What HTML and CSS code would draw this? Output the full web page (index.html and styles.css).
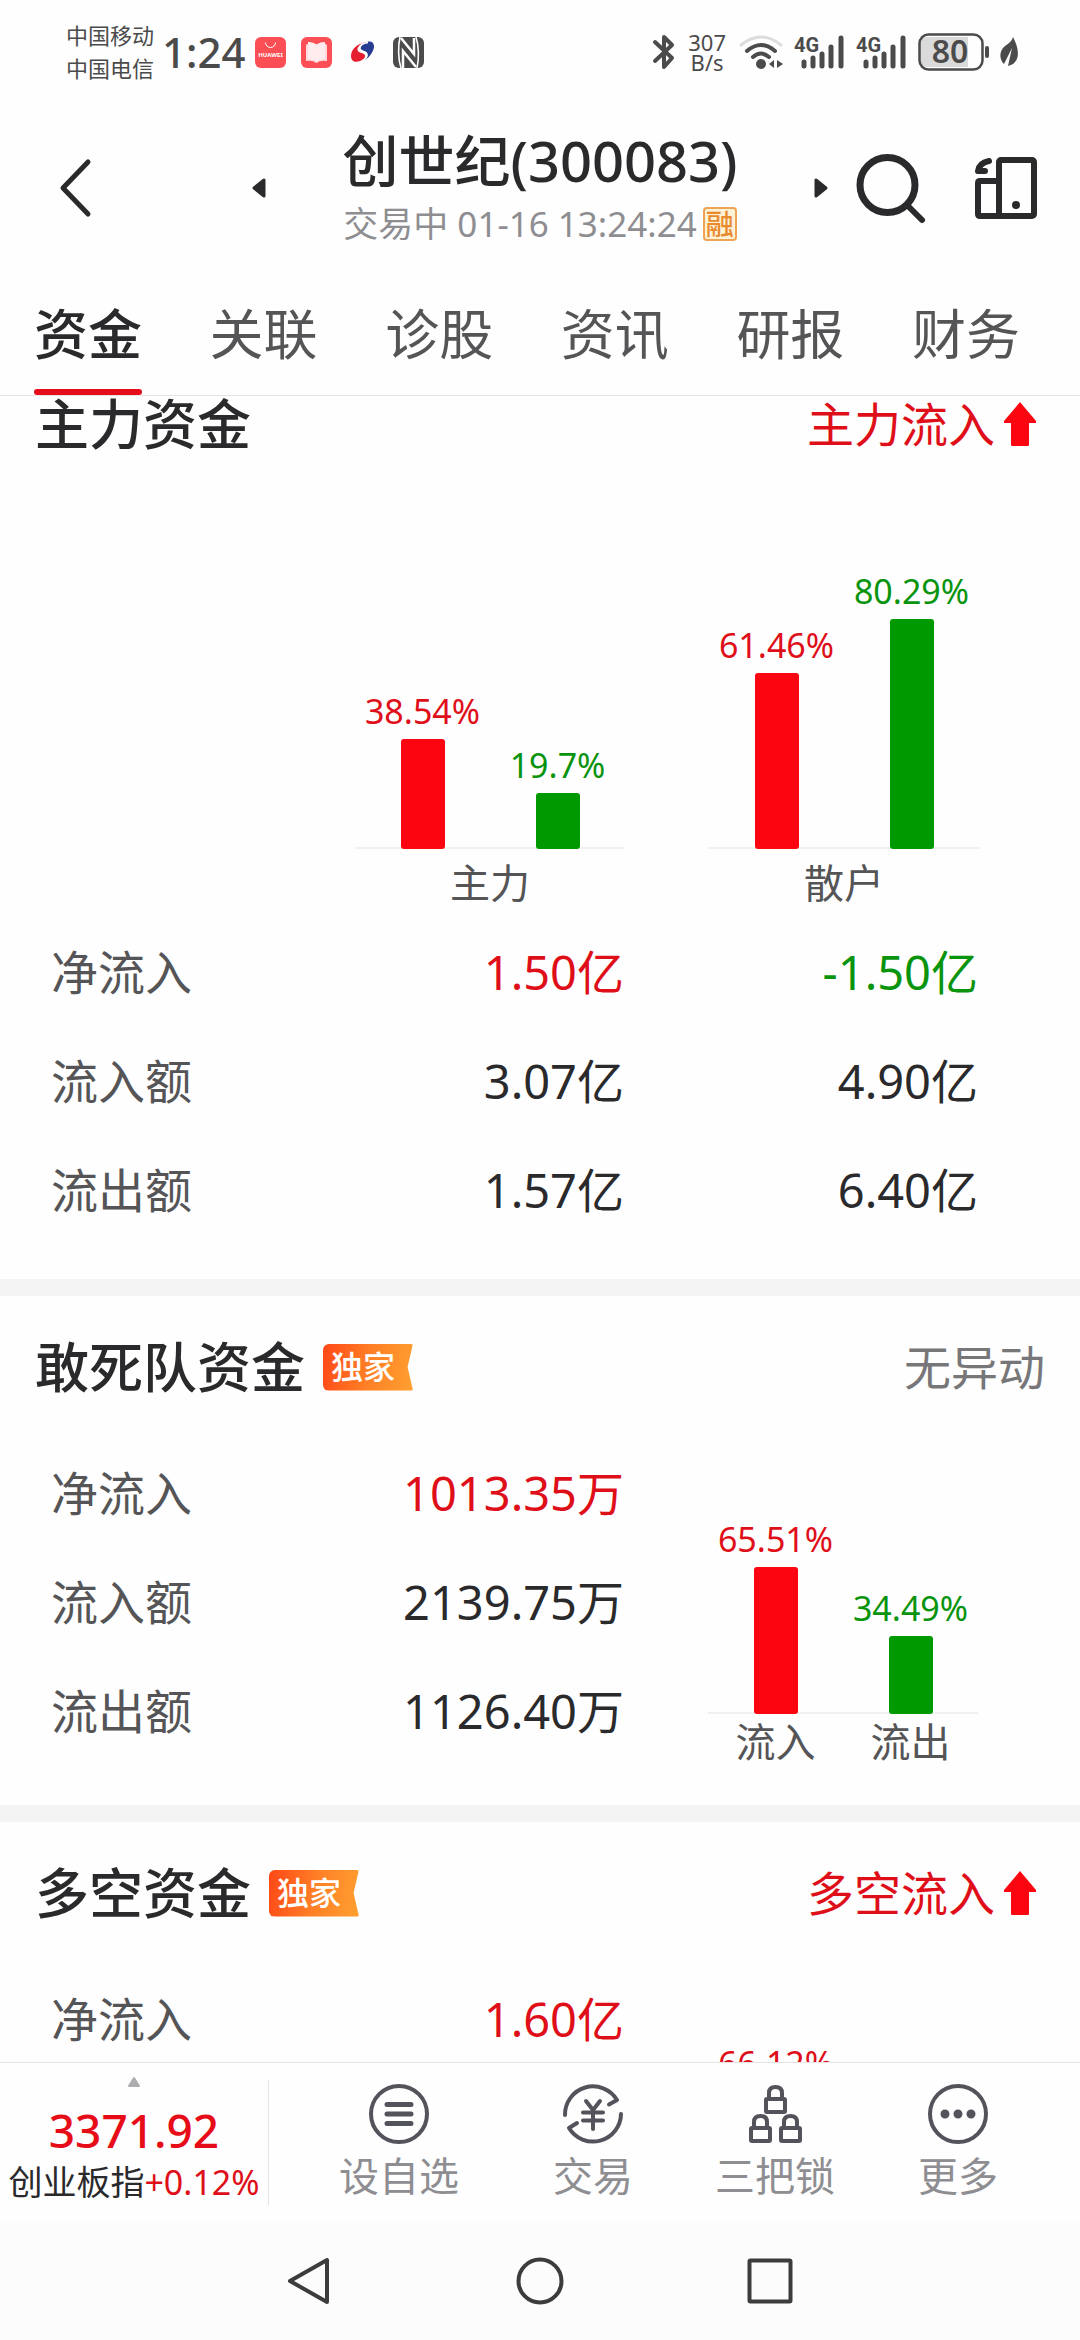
FILE: index.html
```html
<!DOCTYPE html>
<html lang="zh-CN">

<head>
    <meta charset="UTF-8">
    <meta name="viewport" content="width=device-width, initial-scale=1.0">
    <title>创世纪(300083)</title>
    <link rel="stylesheet" href="styles.css">
</head>

<body>
    <!-- 状态栏 -->
    <div class="status-bar">
        <div class="status-left">
            <div class="carrier">
                <span>中国移动</span>
                <span>中国电信</span>
            </div>
            <span class="clock">1:24</span>
            <div class="notices">
                <svg width="31" height="31" viewBox="0 0 31 31">
                    <rect width="31" height="31" rx="6" fill="#fc4f55" />
                    <path d="M10.500 5.500a5 5 0 0 0 10 0" fill="none" stroke="#fff" stroke-width="1" />
                    <text class="huawei" x="15.500" y="20" text-anchor="middle">HUAWEI</text>
                </svg>
                <svg width="31" height="31" viewBox="0 0 31 31">
                    <rect width="31" height="31" rx="6" fill="#fc4f55" />
                    <path d="M5 8q1-1 2-1V5q5 0 8.500 2.500Q19 5 24 5v2q1 0 2 1v16q-7-1-10.500 2Q12 23 5 24z" fill="#ffd9dc" />
                    <path d="M7 5q5 0 8.500 2.500Q19 5 24 5v17q-5 0-8.500 3Q12 22 7 22z" fill="#ffecee" />
                </svg>
                <svg width="31" height="31" viewBox="0 0 31 31">
                    <path d="M20 5C11 6 4 12 4 19c0 5 4 7 9 5 5-1.500 7-6 3-7.500-3-1-7-2-5-6 1.500-3 5-5 9-5.500z" fill="#e51f2f" />
                    <path d="M13 11c1-4 6-6.500 10-6.500 4 .5 5 5 3 9-2 5-6 9-10 10.500 4-3 6-7 3-9-2-1.200-5-1-6-4z" fill="#263d92" />
                    <path d="M21 5.500c-5 .5-9 3-8 6.500 1 3 7 2 7 6 0 3-3 5-5 6" fill="none" stroke="#fff" stroke-width="1.600" />
                </svg>
                <svg width="31" height="31" viewBox="0 0 31 31">
                    <rect width="31" height="31" rx="6" fill="#4b4b4b" />
                    <path d="M7 0C5 9 5 22 8 31M23 0c3 9 3 22 1 31" fill="none" stroke="#fefefe" stroke-width="1.600" />
                    <path d="M10 31V14l13 16M8 1l13 16V1" fill="none" stroke="#fefefe" stroke-width="2.500" />
                </svg>
            </div>
        </div>
        <div class="status-right">
            <svg width="22" height="36" viewBox="0 0 22 36">
                <path d="M2 8l17 16-8 9V3l8 8L2 27" fill="none" stroke="#4b4b4b" stroke-width="4" stroke-linejoin="round" stroke-linecap="round" />
            </svg>
            <div class="speed">
                <span>307</span>
                <span>B/s</span>
            </div>
            <svg width="44" height="34" viewBox="0 0 44 34">
                <g fill="none" stroke="#4b4b4b" stroke-width="4" stroke-linecap="round">
                    <path d="M2 10q20-16 40 0" stroke="#dcdcdc" stroke-width="3" />
                    <path d="M8 16q14-12 28 0" />
                    <path d="M14 22q8-7 16 0" />
                </g>
                <circle cx="22" cy="29" r="5" fill="#4b4b4b" />
                <path d="M35 25v8l-5-4zM38 25v8l6-4z" fill="#4b4b4b" />
            </svg>
            <svg width="51" height="36" viewBox="0 0 51 36">
                <text class="net" x="0" y="18">4G</text>
                <path d="M10 28v4M19 24v8M28 20v12M37 13v19M47 4v28" stroke="#4b4b4b" stroke-width="5" stroke-linecap="round" />
            </svg>
            <svg width="51" height="36" viewBox="0 0 51 36">
                <text class="net" x="0" y="18">4G</text>
                <path d="M10 28v4M19 24v8M28 20v12M37 13v19M47 4v28" stroke="#4b4b4b" stroke-width="5" stroke-linecap="round" />
            </svg>
            <svg width="71" height="38" viewBox="1 0 71 38">
                <path d="M9 4h42v30H9q-6-1-6-6V10q0-6 6-6z" fill="#dadada" />
                <rect x="2.500" y="1.500" width="63" height="35" rx="9" fill="none" stroke="#4b4b4b" stroke-width="2.500" />
                <path d="M70 15v8" stroke="#4b4b4b" stroke-width="4" stroke-linecap="round" />
                <text class="battery" x="33" y="30" text-anchor="middle">80</text>
            </svg>
            <svg width="18" height="30" viewBox="0 0 18 30">
                <path d="M13 0c5 9 7 20 2 25-2 3-5 3-7 4l4-18L4 27C-1 22-1 14 5 9c4-3 7-5 8-9z" fill="#4b4b4b" />
            </svg>
        </div>
    </div>

    <!-- 标题栏 -->
    <header class="header">
        <button class="icon-btn back" aria-label="返回">
            <svg width="32" height="60" viewBox="0 0 32 60">
                <path d="M28 4L3 30l25 26" fill="none" stroke="#2a2a2c" stroke-width="5" stroke-linecap="round" stroke-linejoin="round" />
            </svg>
        </button>
        <div class="stock">
            <button class="icon-btn" aria-label="上一只">
                <svg width="14" height="20" viewBox="0 0 14 20">
                    <path d="M12 2v16L2 10z" fill="#2a2a2c" stroke="#2a2a2c" stroke-width="3" stroke-linejoin="round" />
                </svg>
            </button>
            <div class="stock-info">
                <h1>创世纪(300083)</h1>
                <p>交易中 01-16 13:24:24<span class="margin-tag">融</span></p>
            </div>
            <button class="icon-btn" aria-label="下一只">
                <svg width="14" height="20" viewBox="0 0 14 20">
                    <path d="M2 2v16l10-8z" fill="#2a2a2c" stroke="#2a2a2c" stroke-width="3" stroke-linejoin="round" />
                </svg>
            </button>
        </div>
        <div class="header-tools">
            <button class="icon-btn" aria-label="搜索">
                <svg width="68" height="70" viewBox="0 0 68 70">
                    <circle cx="30.500" cy="32" r="27.500" fill="none" stroke="#2a2a2c" stroke-width="7" />
                    <path d="M52 54l13 13" stroke="#2a2a2c" stroke-width="6" stroke-linecap="round" />
                </svg>
            </button>
            <button class="icon-btn" aria-label="切换设备">
                <svg width="62" height="62" viewBox="0 0 62 62">
                    <g fill="none" stroke="#2a2a2c" stroke-width="6" stroke-linejoin="round" stroke-linecap="round">
                        <rect x="24" y="3" width="35" height="56" rx="2" />
                        <path d="M24 24H5q-2 0-2 2v31q0 2 2 2h19" />
                        <path d="M14 4Q4 6 3 14h7" />
                    </g>
                    <circle cx="41" cy="48" r="4" fill="#2a2a2c" />
                </svg>
            </button>
        </div>
    </header>

    <nav class="tabs">
        <button class="tab active">资金</button>
        <button class="tab">关联</button>
        <button class="tab">诊股</button>
        <button class="tab">资讯</button>
        <button class="tab">研报</button>
        <button class="tab">财务</button>
    </nav>

    <main class="content">
        <!-- 主力资金 -->
        <section class="card card-main">
            <div class="card-head">
                <h2>主力资金</h2>
                <span class="signal up">主力流入
                    <svg width="34" height="46" viewBox="0 0 34 46">
                        <path d="M17 1L33 20v2h-7v22q0 1-1 1H9q-1 0-1-1V22H1v-2z" fill="#fa0510" />
                    </svg>
                </span>
            </div>
            <div class="charts">
                <div class="chart">
                    <div class="plot">
                        <div class="col up"><span>38.54%</span><i class="bar" style="height: 38.54%"></i></div>
                        <div class="col down"><span>19.7%</span><i class="bar" style="height: 19.7%"></i></div>
                    </div>
                    <div class="axis"><span>主力</span></div>
                </div>
                <div class="chart">
                    <div class="plot">
                        <div class="col up"><span>61.46%</span><i class="bar" style="height: 61.46%"></i></div>
                        <div class="col down"><span>80.29%</span><i class="bar" style="height: 80.29%"></i></div>
                    </div>
                    <div class="axis"><span>散户</span></div>
                </div>
            </div>
            <table class="funds funds-wide">
                <tr>
                    <th>净流入</th>
                    <td class="up">1.50亿</td>
                    <td class="down">-1.50亿</td>
                </tr>
                <tr>
                    <th>流入额</th>
                    <td>3.07亿</td>
                    <td>4.90亿</td>
                </tr>
                <tr>
                    <th>流出额</th>
                    <td>1.57亿</td>
                    <td>6.40亿</td>
                </tr>
            </table>
        </section>

        <!-- 敢死队资金 -->
        <section class="card">
            <div class="card-head">
                <h2>敢死队资金</h2>
                <span class="badge">独家</span>
                <span class="signal">无异动</span>
            </div>
            <div class="split">
                <table class="funds">
                    <tr>
                        <th>净流入</th>
                        <td class="up">1013.35万</td>
                    </tr>
                    <tr>
                        <th>流入额</th>
                        <td>2139.75万</td>
                    </tr>
                    <tr>
                        <th>流出额</th>
                        <td>1126.40万</td>
                    </tr>
                </table>
                <div class="chart">
                    <div class="plot">
                        <div class="col up"><span>65.51%</span><i class="bar" style="height: 65.51%"></i></div>
                        <div class="col down"><span>34.49%</span><i class="bar" style="height: 34.49%"></i></div>
                    </div>
                    <div class="axis"><span>流入</span><span>流出</span></div>
                </div>
            </div>
        </section>

        <!-- 多空资金 -->
        <section class="card">
            <div class="card-head">
                <h2>多空资金</h2>
                <span class="badge">独家</span>
                <span class="signal up">多空流入
                    <svg width="34" height="46" viewBox="0 0 34 46">
                        <path d="M17 1L33 20v2h-7v22q0 1-1 1H9q-1 0-1-1V22H1v-2z" fill="#fa0510" />
                    </svg>
                </span>
            </div>
            <div class="split">
                <table class="funds">
                    <tr>
                        <th>净流入</th>
                        <td class="up">1.60亿</td>
                    </tr>
                </table>
                <div class="chart">
                    <div class="plot">
                        <div class="col up"><span>66.12%</span><i class="bar" style="height: 66.12%"></i></div>
                        <div class="col"></div>
                    </div>
                </div>
            </div>
        </section>
    </main>

    <!-- 底部工具栏 -->
    <footer class="toolbar">
        <a class="index" href="#">
            <svg width="14" height="12" viewBox="0 0 14 12">
                <path d="M7 2l5 8H2z" fill="#adadb0" stroke="#adadb0" stroke-width="2" stroke-linejoin="round" />
            </svg>
            <strong>3371.92</strong>
            <span>创业板指<em>+0.12%</em></span>
        </a>
        <div class="actions">
            <button class="action">
                <svg width="60" height="60" viewBox="0 0 60 60">
                    <circle cx="30" cy="30" r="28" />
                    <path d="M18 20.500h24M18 30h24M18 39.500h24" stroke-width="5" />
                </svg>
                设自选
            </button>
            <button class="action">
                <svg width="60" height="60" viewBox="0 0 60 60">
                    <path d="M2 31A28 28 0 0 1 54 16l-8 4.500" />
                    <path d="M58 30A28 28 0 0 1 6 44l8-5" />
                    <path d="M23 17l7 9 7-9M30 26v19M20 28.500h20M20 36.500h20" />
                </svg>
                交易
            </button>
            <button class="action">
                <svg width="60" height="60" viewBox="0 0 60 60">
                    <rect x="21" y="15" width="19" height="13" rx="1" />
                    <path d="M24 15V9q0-6 6.500-6T37 9v6" />
                    <rect x="6" y="44" width="19" height="13" rx="1" />
                    <path d="M9 44v-6q0-6 6.500-6t6.500 6v6" />
                    <rect x="36" y="44" width="19" height="13" rx="1" />
                    <path d="M39 44v-6q0-6 6.500-6t6.500 6v6" />
                </svg>
                三把锁
            </button>
            <button class="action">
                <svg width="60" height="60" viewBox="0 0 60 60">
                    <circle cx="30" cy="30" r="28" />
                    <path d="M17 30h0M30 30h0M43 30h0" stroke-width="9" />
                </svg>
                更多
            </button>
        </div>
    </footer>

    <!-- 系统导航 -->
    <div class="system-nav">
        <button class="icon-btn" aria-label="系统返回">
            <svg width="48" height="48" viewBox="0 0 48 48">
                <path d="M41 3v42L4 24z" />
            </svg>
        </button>
        <button class="icon-btn" aria-label="主页">
            <svg width="48" height="48" viewBox="0 0 48 48">
                <circle cx="24" cy="24" r="21.500" />
            </svg>
        </button>
        <button class="icon-btn" aria-label="最近任务">
            <svg width="48" height="48" viewBox="0 0 48 48">
                <rect x="3.500" y="3.500" width="41" height="41" rx="1" />
            </svg>
        </button>
    </div>
</body>

</html>
```
FILE: styles.css
```css
* {
    box-sizing: border-box;
}

/* 全局 */
body {
    font-family: "Noto Sans", "Noto Sans CJK SC", sans-serif;
    margin: 0;
    height: 100vh;
    display: flex;
    flex-direction: column;
    background: #fefefe;
    color: #2a2a2c;
}

h1,
h2,
p {
    margin: 0;
}

button {
    font-family: inherit;
    background: none;
    border: none;
    padding: 0;
    cursor: pointer;
}

svg {
    display: block;
    flex-shrink: 0;
    overflow: visible;
}

.icon-btn {
    display: block;
}

.up {
    color: #df0f1a;
}

.down {
    color: #0a940e;
}

/* 状态栏 */
.status-bar {
    display: flex;
    justify-content: space-between;
    align-items: center;
    height: 104px;
    flex-shrink: 0;
    padding: 0 62px 0 66px;
    color: #4b4b4b;
}

.status-left,
.status-right,
.notices {
    display: flex;
    align-items: center;
}

.carrier {
    display: flex;
    flex-direction: column;
    font-size: 22px;
    line-height: 33px;
}

.clock {
    font-size: 42px;
    font-weight: 500;
    line-height: 48px;
    margin: 0 9px 0 8px;
}

.notices {
    gap: 15px;
}

.status-right {
    gap: 11px;
}

.speed {
    display: flex;
    flex-direction: column;
    align-items: center;
    padding: 0 2px;
    font-size: 22px;
    line-height: 20px;
}

.huawei {
    font-size: 6px;
    font-weight: 700;
    fill: #fff;
}

.net {
    font-family: Roboto, sans-serif;
    font-size: 20px;
    font-weight: 700;
    fill: #4b4b4b;
}

.battery {
    font-size: 32px;
    font-weight: 600;
    fill: #4b4b4b;
}

/* 标题栏 */
.header {
    display: grid;
    grid-template-columns: 252fr 576fr 252fr;
    align-items: center;
    height: 168px;
    flex-shrink: 0;
}

.back {
    margin-left: 60px;
}

.stock {
    display: flex;
    justify-content: space-between;
    align-items: center;
}

.stock-info h1 {
    font-size: 56px;
    font-weight: 500;
    line-height: 64px;
    text-align: center;
}

.stock-info p {
    display: flex;
    justify-content: center;
    align-items: center;
    margin-top: 8px;
    font-size: 35px;
    line-height: 48px;
    color: #8e8e92;
}

.margin-tag {
    margin-left: 6px;
    width: 34px;
    height: 34px;
    border: 2px solid #eda553;
    border-radius: 4px;
    background: #fdf1d6;
    color: #e88a2c;
    font-size: 28px;
    font-weight: 500;
    line-height: 30px;
    text-align: center;
}

.header-tools {
    display: flex;
    align-items: center;
    gap: 50px;
    padding-left: 29px;
}

/* 标签页 */
.tabs {
    display: flex;
    justify-content: space-between;
    padding: 0 60px 0 34px;
    border-bottom: 1px solid #e4e4e4;
    flex-shrink: 0;
}

.tab {
    position: relative;
    height: 123px;
    font-size: 54px;
    line-height: 64px;
    color: #555557;
}

.tab.active {
    font-weight: 500;
    color: #2a2a2c;
}

.tab.active::after {
    content: "";
    position: absolute;
    left: 0;
    right: 0;
    bottom: 0;
    height: 6px;
    border-radius: 3px;
    background: #e60c18;
}

/* 资金卡片 */
.content {
    flex: 1;
    min-height: 0;
    overflow: hidden;
}

.card {
    padding-bottom: 35px;
    border-bottom: 17px solid #f4f4f4;
}

.card-main {
    margin-top: -43px;
}

.card-head {
    display: flex;
    align-items: center;
    height: 142px;
    padding: 0 35px;
}

.card-head h2 {
    font-size: 54px;
    font-weight: 500;
    line-height: 64px;
}

.badge {
    margin-left: 18px;
    width: 90px;
    height: 47px;
    padding-left: 8px;
    border-radius: 6px 2px 2px 6px;
    background: linear-gradient(100deg, #ff4716, #ff7f26 50%, #ffa030);
    clip-path: polygon(0 0, 100% 0, 94% 50%, 100% 100%, 0 100%);
    color: #fff;
    font-size: 32px;
    font-weight: 500;
    line-height: 46px;
}

.signal {
    display: flex;
    align-items: center;
    gap: 8px;
    margin-left: auto;
    font-size: 47px;
    line-height: 64px;
    color: #77777a;
}

.signal.up {
    padding-right: 8px;
    color: #df0f1a;
}

.funds {
    width: 100%;
    border-collapse: collapse;
    font-size: 47px;
    line-height: 64px;
}

.funds th,
.funds td {
    height: 109px;
    padding: 0;
    font-weight: 400;
    text-align: right;
}

.funds th {
    width: 240px;
    text-align: left;
    color: #555557;
}

.funds-wide {
    width: auto;
    min-width: calc(100% - 153px);
    margin: 0 102px 0 51px;
}

.funds-wide td:last-child {
    width: 354px;
}

.split {
    display: grid;
    grid-template-columns: 573fr 270fr;
    align-items: start;
    gap: 84px;
    padding: 0 102px 0 51px;
}

/* 柱状图 */
.charts {
    display: flex;
    justify-content: flex-end;
    gap: 84px;
    padding: 68px 101px 0 0;
}

.chart {
    width: 270px;
}

.split .chart {
    padding-top: 51px;
}

.plot {
    display: flex;
    height: 286px;
    box-shadow: inset 0 -2px 0 #f0f0f0;
}

.split .plot {
    height: 225px;
}

.col {
    flex: 1;
    display: flex;
    flex-direction: column;
    justify-content: flex-end;
    align-items: center;
    font-size: 34px;
    line-height: 40px;
}

.bar {
    flex-shrink: 0;
    width: 44px;
    margin-top: 8px;
    border-radius: 3px;
    background: #fa0510;
}

.down .bar {
    background: #009900;
}

.axis {
    display: flex;
    font-size: 40px;
    line-height: 68px;
    color: #555557;
}

.axis span {
    flex: 1;
    text-align: center;
}

.split .axis {
    line-height: 56px;
}

/* 底部工具栏 */
.toolbar {
    display: flex;
    height: 160px;
    flex-shrink: 0;
    border-top: 1px solid #e4e4e4;
    background: #fefefe;
}

.index {
    display: flex;
    flex-direction: column;
    align-items: center;
    width: 269px;
    margin: 17px 0;
    border-right: 1px solid #e4e4e4;
    color: #2a2a2c;
    text-decoration: none;
    white-space: nowrap;
}

.index svg {
    margin-top: -4px;
}

.index strong {
    margin-top: 12px;
    font-size: 46px;
    font-weight: 500;
    line-height: 60px;
    color: #e60c18;
}

.index span {
    font-size: 34px;
    line-height: 44px;
}

.index em {
    font-style: normal;
    color: #df0f1a;
}

.actions {
    flex: 1;
    display: grid;
    grid-template-columns: 194fr 194fr 170fr 196fr;
    padding: 0 24px 0 33px;
}

.action {
    display: flex;
    flex-direction: column;
    align-items: center;
    padding-top: 21px;
    font-size: 40px;
    line-height: 56px;
    color: #8e8e92;
}

.action svg {
    margin-bottom: 4px;
    fill: none;
    stroke: #53535b;
    stroke-width: 4;
    stroke-linecap: round;
    stroke-linejoin: round;
}

/* 系统导航 */
.system-nav {
    display: flex;
    justify-content: center;
    align-items: center;
    gap: 182px;
    height: 118px;
    flex-shrink: 0;
    background: #fcfcfc;
}

.system-nav svg {
    fill: none;
    stroke: #3c3c3c;
    stroke-width: 4;
    stroke-linejoin: round;
}
```
